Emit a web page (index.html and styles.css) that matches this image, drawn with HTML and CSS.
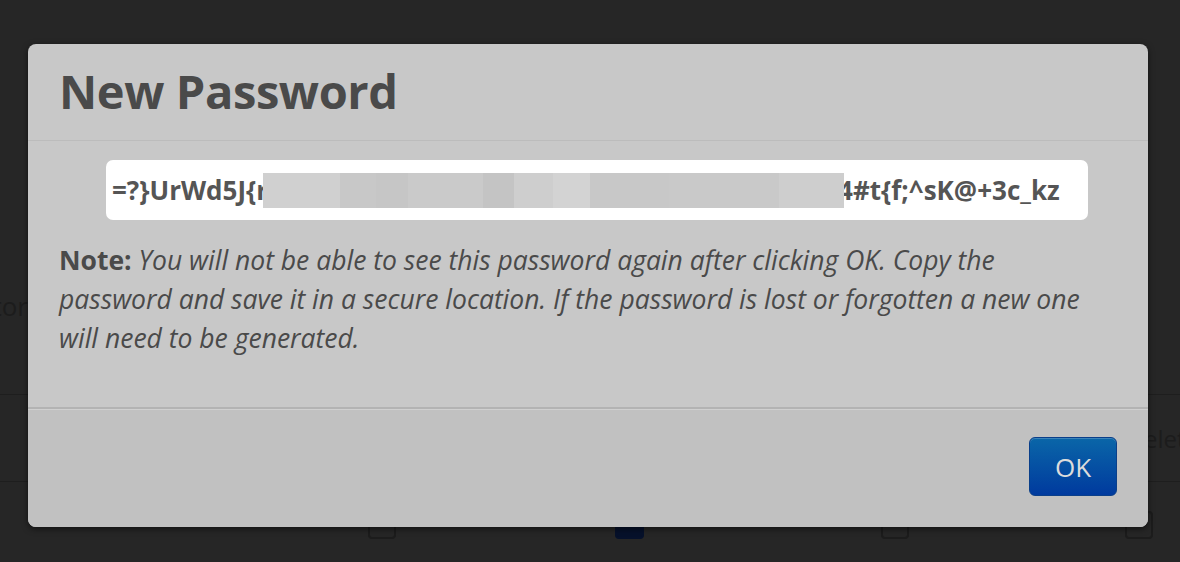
FILE: index.html
```html
<!DOCTYPE html>
<html lang="en">
<head>
  <meta charset="UTF-8">
  <meta name="viewport" content="width=device-width, initial-scale=1.0">
  <title>New Password</title>
  <link rel="stylesheet" href="styles.css">
</head>
<body>
  <div class="page">
    <div class="page-row page-row-top">
      <div class="page-label"><span>Administrator</span></div>
    </div>
    <div class="page-row page-row-head">
      <span class="page-head-right">Delete</span>
    </div>
    <div class="page-row page-row-checks">
      <span class="check check-a"></span>
      <span class="check check-on"></span>
      <span class="check check-c"></span>
      <span class="check"></span>
    </div>
  </div>

  <div class="modal">
    <div class="modal-header">
      <h1>New Password</h1>
    </div>

    <div class="modal-body">
      <div class="password-box">
        <span class="pw-text">=?}UrWd5J{r</span>
        <span class="redact">
          <span class="seg" style="width: 77px; background: #d0d0d0;"></span>
          <span class="seg" style="width: 36px; background: #c8c8c8;"></span>
          <span class="seg" style="width: 32px; background: #c6c6c6;"></span>
          <span class="seg" style="width: 75px; background: #cacaca;"></span>
          <span class="seg" style="width: 31px; background: #c4c4c4;"></span>
          <span class="seg" style="width: 39px; background: #cecece;"></span>
          <span class="seg" style="width: 37px; background: #d3d3d3;"></span>
          <span class="seg" style="width: 79px; background: #c8c8c8;"></span>
          <span class="seg" style="width: 110px; background: #c9c9c9;"></span>
          <span class="seg" style="width: 65px; background: #cecece;"></span>
        </span>
        <span class="pw-text pw-tail">4#t{f;^sK@+3c_kz</span>
      </div>

      <p class="note"><strong>Note:</strong> <em>You will not be able to see this password again after clicking OK. Copy the password and save it in a secure location. If the password is lost or forgotten a new one will need to be generated.</em></p>
    </div>

    <div class="modal-footer">
      <button class="btn-ok">OK</button>
    </div>
  </div>
</body>
</html>
```

FILE: styles.css
```css
:root {
  --page-bg: #262626;
  --dialog-bg: #c8c8c8;
  --footer-bg: #c1c1c1;
  --text: #4a4a4a;
}
html, body {
  margin: 0;
  height: 100%;
}
body {
  font-family: 'Open Sans', 'Noto Sans', sans-serif;
  background: var(--page-bg);
  overflow: hidden;
  position: relative;
}

/* page behind the dialog */
.page {
  padding-top: 280px;
}
.page-row {
  display: flex;
  align-items: center;
  border-bottom: 1px solid #1e1e1e;
}
.page-row-top {
  height: 106px;
  padding-top: 8px;
  align-items: flex-start;
}
.page-label {
  width: 28px;
  overflow: hidden;
  display: flex;
  justify-content: flex-end;
  white-space: nowrap;
  font-size: 26px;
  color: #1c1c1c;
}
.page-row-head {
  height: 86px;
  justify-content: flex-end;
  overflow: hidden;
}
.page-head-right {
  font-size: 24px;
  color: #1c1c1c;
  margin-right: -19px;
  white-space: nowrap;
}
.page-row-checks {
  height: 86px;
  border-bottom: none;
  padding-left: 368px;
}
.check {
  box-sizing: border-box;
  width: 28px;
  height: 28px;
  border: 2px solid #1c1c1c;
  border-radius: 4px;
}
.check-a {
  margin-right: 219px;
}
.check-on {
  background: #06112b;
  border-color: #06112b;
  width: 29px;
  margin-right: 237px;
}
.check-c {
  margin-right: 216px;
}

/* dialog */
.modal {
  position: absolute;
  left: 28px;
  top: 44px;
  width: 1120px;
  height: 483px;
  background: var(--dialog-bg);
  border-radius: 8px;
  box-shadow: 0 2px 6px rgba(0, 0, 0, 0.55);
  display: flex;
  flex-direction: column;
  overflow: hidden;
}
.modal-header {
  padding: 19px 31px 21px;
  border-bottom: 1px solid #bcbcbc;
}
.modal-header h1 {
  margin: 0;
  font-size: 47px;
  line-height: 56px;
  font-weight: 700;
  letter-spacing: -0.4px;
  color: var(--text);
}
.modal-body {
  flex: 1;
  padding: 19px 31px 0;
}
.password-box {
  margin: 0 29px 0 47px;
  height: 60px;
  background: #ffffff;
  border-radius: 7px;
  display: flex;
  align-items: center;
  padding-left: 6px;
  white-space: nowrap;
  overflow: hidden;
}
.pw-text {
  font-size: 26px;
  font-weight: 700;
  color: #555555;
}
.redact {
  display: flex;
  height: 35px;
  margin-left: -5px;
  position: relative;
  z-index: 1;
}
.seg {
  height: 100%;
}
.pw-tail {
  margin-left: -6px;
}
.note {
  margin: 21px 14px 0 0;
  font-size: 26.5px;
  line-height: 39px;
  color: var(--text);
}
.note strong {
  font-weight: 700;
}
.modal-footer {
  height: 90px;
  border-top: 2px solid #b3b3b3;
  box-shadow: inset 0 1px 0 #d0d0d0;
  background: var(--footer-bg);
  display: flex;
  justify-content: flex-end;
  padding: 28px 31px 0;
}
.btn-ok {
  width: 88px;
  height: 59px;
  border: 1px solid #0a3f8a;
  border-radius: 6px;
  background: linear-gradient(#0a66a8, #003a9e);
  color: #dcdcdc;
  font-family: inherit;
  font-size: 26px;
  box-shadow: inset 0 1px 0 rgba(255, 255, 255, 0.2);
  cursor: pointer;
}
```
